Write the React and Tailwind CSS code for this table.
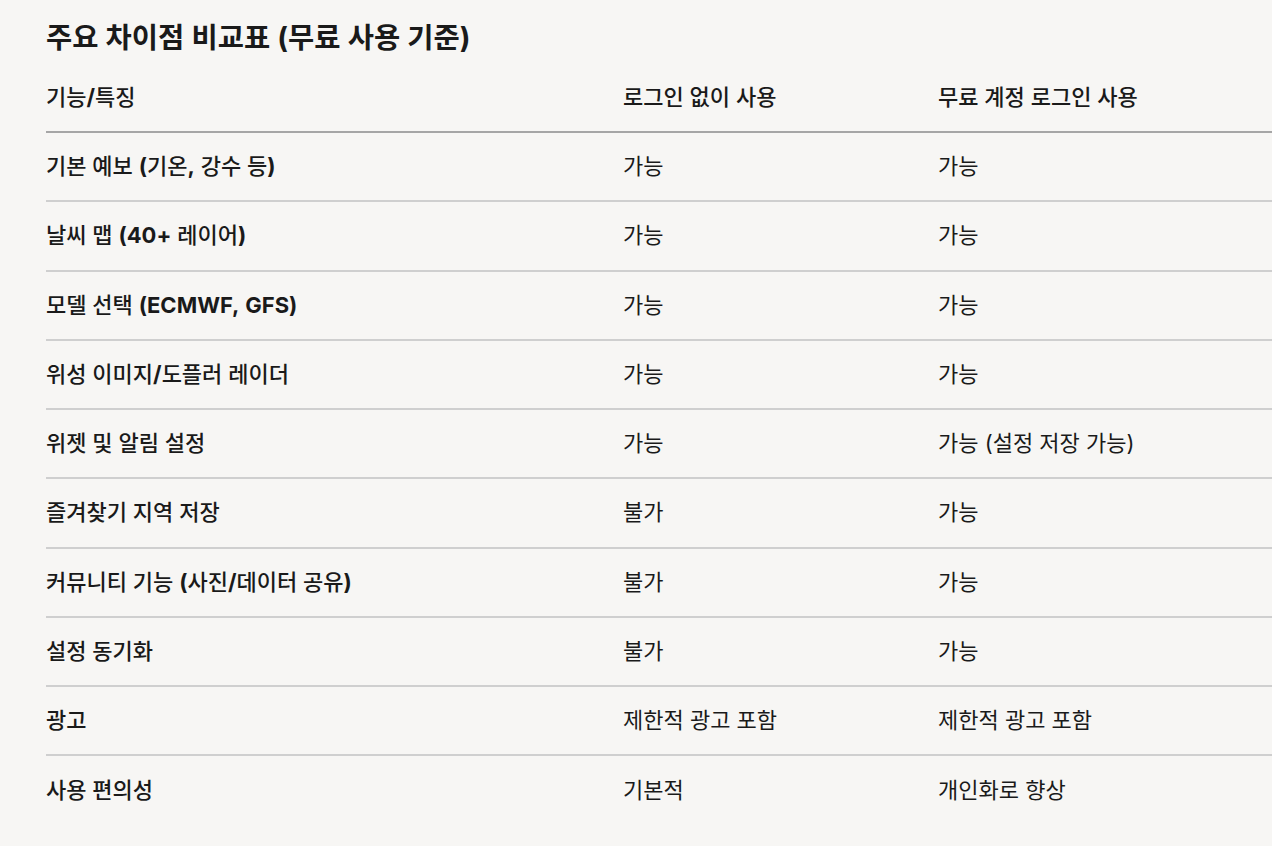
import React from "react";

const rows = [
  ["기본 예보 (기온, 강수 등)", "가능", "가능"],
  ["날씨 맵 (40+ 레이어)", "가능", "가능"],
  ["모델 선택 (ECMWF, GFS)", "가능", "가능"],
  ["위성 이미지/도플러 레이더", "가능", "가능"],
  ["위젯 및 알림 설정", "가능", "가능 (설정 저장 가능)"],
  ["즐겨찾기 지역 저장", "불가", "가능"],
  ["커뮤니티 기능 (사진/데이터 공유)", "불가", "가능"],
  ["설정 동기화", "불가", "가능"],
  ["광고", "제한적 광고 포함", "제한적 광고 포함"],
  ["사용 편의성", "기본적", "개인화로 향상"],
];

function Strong({ text }) {
  const parts = text.split(/([^\uAC00-\uD7A3\s]+)/);
  return (
    <span>
      {parts.map((p, i) =>
        /[^\uAC00-\uD7A3\s]/.test(p) ? (
          <span key={i} className="font-bold">
            {p}
          </span>
        ) : (
          <span key={i}>{p}</span>
        )
      )}
    </span>
  );
}

export default function App() {
  return (
    <div
      className="w-[1272px] h-[846px] overflow-hidden bg-[#f7f6f4] text-[#1a1a1a] pl-[46px]"
      style={{ fontFamily: 'Inter, "Noto Sans CJK KR", sans-serif' }}
    >
      <div className="h-[63px] pt-[13px]">
        <h2 className="h-[50px] flex items-center text-[28.5px] font-semibold">
          <Strong text="주요 차이점 비교표 (무료 사용 기준)" />
        </h2>
      </div>
      <div className="w-[1240px]">
        <div className="flex h-[70px] items-center border-b-2 border-[#a6a6a6] text-[22px] font-medium">
          <div className="w-[577px]">
            <Strong text="기능/특징" />
          </div>
          <div className="w-[315px]">로그인 없이 사용</div>
          <div className="flex-1">무료 계정 로그인 사용</div>
        </div>
        {rows.map((r, i) => (
          <div
            key={i}
            className={`flex h-[69.25px] items-center text-[22px] ${
              i < rows.length - 1 ? "border-b-2 border-[#cfcfcf]" : ""
            }`}
          >
            <div className="w-[577px] font-medium">
              <Strong text={r[0]} />
            </div>
            <div className="w-[315px]">{r[1]}</div>
            <div className="flex-1">{r[2]}</div>
          </div>
        ))}
      </div>
    </div>
  );
}
